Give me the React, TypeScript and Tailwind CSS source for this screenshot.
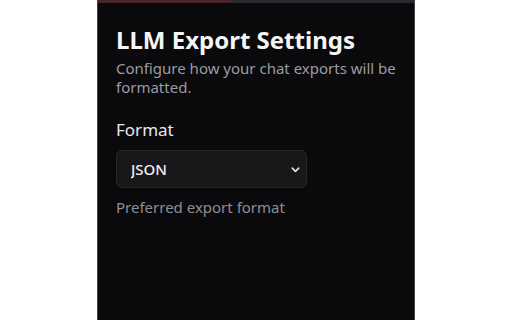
export default function App() {
  return (
    <div className="flex h-[320px] w-[512px] bg-white font-['Noto_Sans',sans-serif]">
      <div className="ml-[97px] flex w-[318px] flex-col border-x border-[#3f3f42] bg-[#0a0a0c]">
        {/* browser strip behind popup */}
        <div className="flex h-[3px]">
          <div className="w-[133px] bg-[#4a2426]" />
          <div className="flex-1 bg-[#2c2c30]" />
        </div>
        <div className="px-[18px] pt-[22px]">
          <h1 className="text-[24px] font-bold leading-[30px] text-[#f5f5f5]">LLM Export Settings</h1>
          <p className="mt-[4px] text-[15px] leading-[19px] text-[#9b9ba3]">
            Configure how your chat exports will be formatted.
          </p>
          <div className="mt-[22px]">
            <label className="block text-[17px] leading-[22px] text-[#e8e8ea]">Format</label>
            <div className="relative mt-[9px] w-[191px]">
              <select className="h-[38px] w-full appearance-none rounded-[6px] border border-[#27272a] bg-[#18181b] pl-[14px] text-[15px] font-medium text-[#f0f0f2] outline-none">
                <option>JSON</option>
              </select>
              <svg
                className="pointer-events-none absolute right-[6px] top-[14px]"
                width="11"
                height="11"
                viewBox="0 0 24 24"
                fill="none"
                stroke="#e4e4e7"
                strokeWidth="3.5"
                strokeLinecap="round"
                strokeLinejoin="round"
              >
                <path d="M5 9l7 7 7-7" />
              </svg>
            </div>
            <p className="mt-[9px] text-[15px] leading-[20px] text-[#8e8e96]">Preferred export format</p>
          </div>
        </div>
      </div>
    </div>
  )
}
